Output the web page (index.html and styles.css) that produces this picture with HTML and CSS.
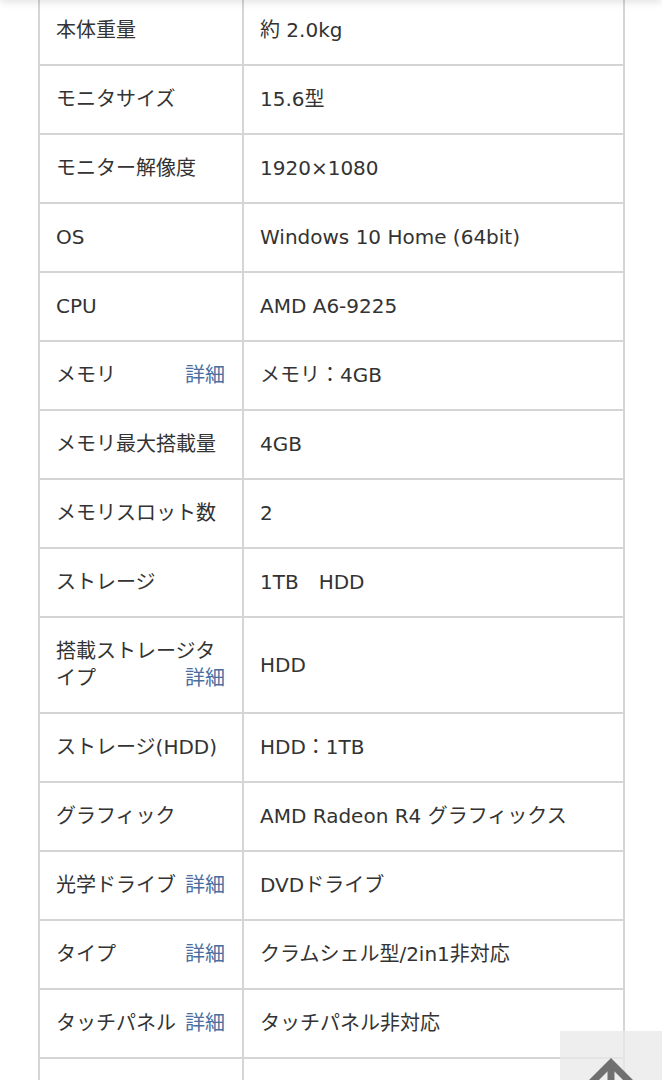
FILE: index.html
```html
<!DOCTYPE html>
<html lang="ja">
<head>
  <meta charset="utf-8">
  <link rel="stylesheet" href="styles.css">
</head>
<body>
  <div class="header-shadow"></div>

  <div class="spec-wrap">
    <table class="spec-table">
      <colgroup>
        <col class="col-label">
        <col>
      </colgroup>
      <tr><th>本体重量</th><td>約 2.0kg</td></tr>
      <tr><th>モニタサイズ</th><td>15.6型</td></tr>
      <tr><th>モニター解像度</th><td>1920×1080</td></tr>
      <tr><th>OS</th><td>Windows 10 Home (64bit)</td></tr>
      <tr><th>CPU</th><td>AMD A6-9225</td></tr>
      <tr><th>メモリ<a class="detail" href="#">詳細</a></th><td>メモリ：4GB</td></tr>
      <tr><th>メモリ最大搭載量</th><td>4GB</td></tr>
      <tr><th>メモリスロット数</th><td>2</td></tr>
      <tr><th>ストレージ</th><td>1TB　HDD</td></tr>
      <tr><th>搭載ストレージタイプ<a class="detail" href="#">詳細</a></th><td>HDD</td></tr>
      <tr><th>ストレージ(HDD)</th><td>HDD：1TB</td></tr>
      <tr><th>グラフィック</th><td>AMD Radeon R4 グラフィックス</td></tr>
      <tr><th>光学ドライブ<a class="detail" href="#">詳細</a></th><td>DVDドライブ</td></tr>
      <tr><th>タイプ<a class="detail" href="#">詳細</a></th><td>クラムシェル型/2in1非対応</td></tr>
      <tr><th>タッチパネル<a class="detail" href="#">詳細</a></th><td>タッチパネル非対応</td></tr>
      <tr><th>&nbsp;</th><td>&nbsp;</td></tr>
    </table>
  </div>

  <a class="page-top" href="#">
    <svg width="52" height="40" viewBox="0 0 52 40">
      <path d="M6 28 L26 8 L46 28" fill="none" stroke="#707070" stroke-width="7"/>
      <path d="M26 10 L26 40" fill="none" stroke="#707070" stroke-width="7"/>
    </svg>
  </a>
</body>
</html>
```

FILE: styles.css
```css
* {
  box-sizing: border-box;
}

body {
  margin: 0;
  background: #fff;
  color: #333;
  font-family: "DejaVu Sans", "Noto Sans CJK JP", sans-serif;
}

.header-shadow {
  position: fixed;
  top: -10px;
  left: 0;
  right: 0;
  height: 10px;
  box-shadow: 0 2px 8px rgba(0, 0, 0, 0.12);
  z-index: 5;
}

.spec-wrap {
  margin-top: -5px;
  padding-left: 38px;
}

.spec-table {
  width: 587px;
  border-collapse: collapse;
  table-layout: fixed;
  font-size: 20px;
  line-height: 27px;
}

.col-label {
  width: 204px;
}

.spec-table th,
.spec-table td {
  border: 2px solid #d5d5d5;
  padding: 20px 17px 20px 16px;
  vertical-align: middle;
  text-align: left;
  font-weight: normal;
}

.detail {
  float: right;
  color: #4a6e9f;
  text-decoration: none;
}

.page-top {
  position: fixed;
  right: 0;
  top: 1031px;
  width: 102px;
  height: 100px;
  background: rgba(232, 232, 232, 0.75);
  display: flex;
  justify-content: center;
  padding-top: 24px;
}

.page-top svg {
  display: block;
}
```
